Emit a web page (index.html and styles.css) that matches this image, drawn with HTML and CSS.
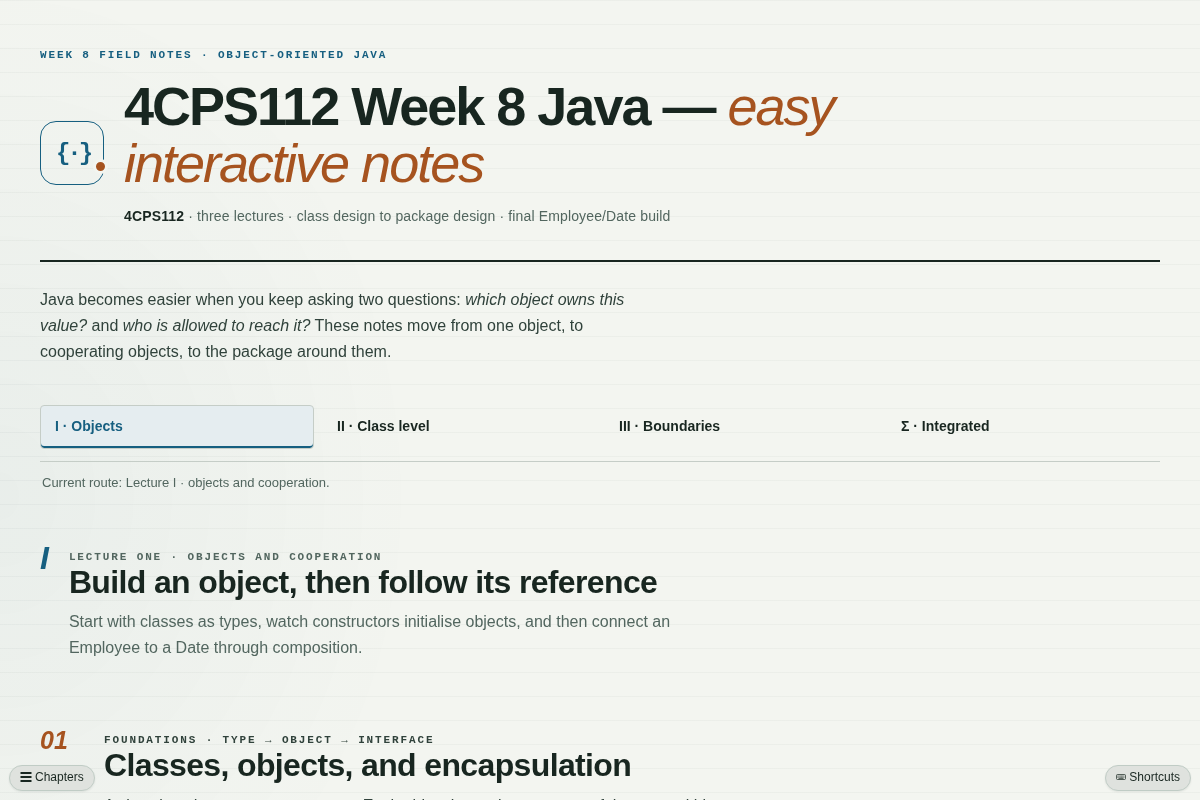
FILE: index.html
```html
<!DOCTYPE html>
<html lang="en">
<head>
    <meta charset="UTF-8">
    <meta name="viewport" content="width=device-width, initial-scale=1.0">
    <title>4CPS112 Week 8 Java — easy interactive notes</title>
    <link rel="stylesheet" href="styles.css">
</head>
<body>
    <div class="page">
        <header class="masthead">
            <p class="eyebrow">Week 8 field notes · object-oriented Java</p>
            <div class="title-row">
                <div class="logo" aria-hidden="true">{·}</div>
                <div class="title-text">
                    <h1>4CPS112 Week 8 Java — <em>easy interactive notes</em></h1>
                    <p class="meta"><strong>4CPS112</strong> · three lectures · class design to package design · final Employee/Date build</p>
                </div>
            </div>
        </header>

        <p class="lede">Java becomes easier when you keep asking two questions: <em>which object owns this value?</em> and <em>who is allowed to reach it?</em> These notes move from one object, to cooperating objects, to the package around them.</p>

        <nav class="tabs" aria-label="Lecture routes">
            <a class="tab active" href="#lecture-1">I · Objects</a>
            <a class="tab" href="#lecture-2">II · Class level</a>
            <a class="tab" href="#lecture-3">III · Boundaries</a>
            <a class="tab" href="#integrated">Σ · Integrated</a>
        </nav>
        <p class="route">Current route: Lecture I · objects and cooperation.</p>

        <section class="lecture" id="lecture-1">
            <div class="numeral">I</div>
            <div>
                <p class="kicker">Lecture one · objects and cooperation</p>
                <h2>Build an object, then follow its reference</h2>
                <p class="summary">Start with classes as types, watch constructors initialise objects, and then connect an Employee to a Date through composition.</p>
            </div>
        </section>

        <article class="chapter" id="chapter-1">
            <div class="number">01</div>
            <div>
                <p class="kicker">Foundations · type → object → interface</p>
                <h2>Classes, objects, and encapsulation</h2>
                <p class="summary">A class is a data type you compose. Each object keeps its own copy of the state within.</p>
            </div>
        </article>
    </div>

    <button type="button" class="pill pill-left">
        <svg width="12" height="12" viewBox="0 0 12 12" aria-hidden="true">
            <path d="M0.5 2h11M0.5 6h11M0.5 10h11" stroke="currentColor" stroke-width="1.8"/>
        </svg>
        Chapters
    </button>
    <button type="button" class="pill pill-right">
        <svg width="10" height="10" viewBox="0 0 10 10" fill="none" stroke="currentColor" aria-hidden="true">
            <rect x="0.5" y="2.5" width="9" height="5" rx="1" stroke-width="0.7"/>
            <path d="M1.5 4h7M1.5 5.3h7" stroke-width="0.8" stroke-dasharray="0.8 0.4"/>
            <path d="M2.5 6.6h5" stroke-width="0.7"/>
        </svg>
        Shortcuts
    </button>
</body>
</html>
```

FILE: styles.css
```css
:root {
    --paper: #f3f5f0;
    --ink: #182620;
    --text: #30423b;
    --muted: #52665f;
    --blue: #165f80;
    --rust: #a6531f;
    --rule: #c5cdc7;
}
* {
    box-sizing: border-box;
}
body {
    margin: 0;
    min-height: 100vh;
    font-family: "Liberation Sans", Arial, sans-serif;
    font-size: 16px;
    color: var(--ink);
    background-color: var(--paper);
}
/* ruled paper with a cool wash on the left */
body::before {
    content: "";
    position: fixed;
    inset: 0;
    z-index: -1;
    background:
        repeating-linear-gradient(180deg, rgba(24, 38, 32, 0.03) 0, rgba(24, 38, 32, 0.03) 1px, transparent 1px, transparent 24px),
        radial-gradient(ellipse 420px 520px at 0 62%, rgba(22, 95, 128, 0.045), transparent);
}
h1, h2, p {
    margin: 0;
}
.page {
    max-width: 1200px;
    margin: 0 auto;
    padding: 48px 40px 80px;
}
.masthead {
    padding-bottom: 33px;
    border-bottom: 2px solid var(--ink);
}
.eyebrow, .kicker {
    font-family: "Liberation Mono", "Courier New", monospace;
    font-size: 11px;
    line-height: 14px;
    font-weight: bold;
    letter-spacing: 0.17em;
    text-transform: uppercase;
}
.eyebrow {
    margin-bottom: 16px;
    color: var(--blue);
}
.title-row {
    display: flex;
    align-items: center;
    gap: 20px;
}
.logo {
    position: relative;
    flex: none;
    width: 64px;
    height: 64px;
    padding-left: 2px;
    border: 1px solid var(--blue);
    border-radius: 16px;
    font-family: "Liberation Mono", "Courier New", monospace;
    font-size: 24px;
    line-height: 64px;
    font-weight: bold;
    letter-spacing: -3px;
    text-align: center;
    color: var(--blue);
}
.logo::after {
    content: "";
    position: absolute;
    right: -5px;
    bottom: 10px;
    width: 9px;
    height: 9px;
    border: 3px solid var(--paper);
    border-radius: 50%;
    background: var(--rust);
}
h1 {
    max-width: 820px;
    font-size: 54px;
    line-height: 57px;
    letter-spacing: -2px;
}
h1 em {
    font-weight: normal;
    color: var(--rust);
}
.meta {
    margin-top: 13px;
    font-size: 14px;
    line-height: 22px;
    letter-spacing: 0.01em;
    color: var(--muted);
}
.meta strong {
    color: var(--ink);
}
.lede {
    max-width: 620px;
    margin-top: 25px;
    line-height: 26px;
    color: var(--text);
}
.tabs {
    display: grid;
    grid-template-columns: repeat(4, 1fr);
    gap: 8px;
    margin-top: 40px;
    padding-bottom: 12px;
    border-bottom: 1px solid var(--rule);
}
.tab {
    padding: 12px 14px 13px;
    border: 1px solid transparent;
    border-radius: 4px;
    font-size: 14px;
    line-height: 17px;
    font-weight: bold;
    text-decoration: none;
    color: var(--ink);
}
.tab.active {
    border-color: var(--rule);
    background: #e5edf0;
    box-shadow: inset 0 -2px 0 var(--blue);
    color: var(--blue);
}
.route {
    margin: 12px 0 0 2px;
    font-size: 13px;
    line-height: 18px;
    color: var(--muted);
}
.lecture, .chapter {
    display: flex;
    gap: 20px;
}
.lecture {
    margin-top: 52px;
}
.chapter {
    margin-top: 66px;
}
.numeral, .number {
    font-weight: bold;
    font-style: italic;
}
.numeral {
    font-size: 32px;
    line-height: 28px;
    color: var(--blue);
}
.number {
    width: 44px;
    font-size: 25px;
    line-height: 26px;
    color: var(--rust);
}
.kicker {
    margin-top: 6px;
    color: var(--muted);
}
h2 {
    font-size: 32px;
    line-height: 36px;
    letter-spacing: -0.02em;
}
.summary {
    max-width: 620px;
    margin-top: 9px;
    line-height: 26px;
    color: var(--muted);
}
.chapter .kicker {
    color: var(--text);
}
.chapter .summary {
    margin-top: 10px;
    color: var(--text);
}
.pill {
    position: fixed;
    bottom: 9px;
    display: flex;
    align-items: center;
    gap: 3px;
    height: 26px;
    padding: 0 10px 2px;
    border: 1px solid #c0ccc5;
    border-radius: 13px;
    background: #dfe2de;
    box-shadow: 0 1px 2px rgba(24, 38, 32, 0.08);
    font-family: inherit;
    font-size: 12px;
    color: var(--ink);
}
.pill-left {
    left: 9px;
}
.pill-right {
    right: 9px;
}
```
